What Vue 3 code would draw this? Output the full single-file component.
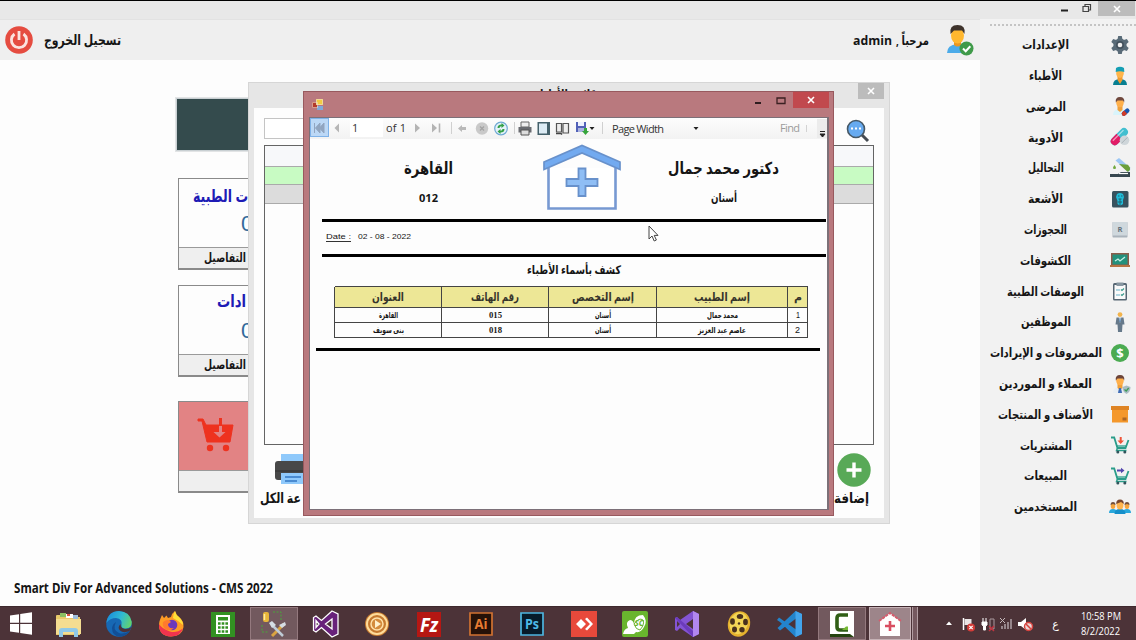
<script setup>
import { h } from 'vue'

// Single line of text fitted to an exact width.
const Fit = (p) =>
  h('svg', { width: p.w, height: p.s * 1.4, class: 'fit' }, [
    h('text', {
      x: p.w / 2,
      y: p.s * 1.05,
      'text-anchor': 'middle',
      'font-size': p.s,
      textLength: p.w,
      lengthAdjust: 'spacingAndGlyphs',
      direction: p.ltr ? 'ltr' : 'rtl'
    }, p.t)
  ])
Fit.props = { w: Number, s: Number, t: String, ltr: Boolean }

const person = (skin, hair, body) =>
  `<path d="M3 19q0-6 7-6t7 6z" fill="${body}"/><path d="M7.5 9h5v5l-2.5 2-2.5-2z" fill="#f0a03a"/><ellipse cx="10" cy="6.5" rx="3.8" ry="4.8" fill="${skin}"/><path d="M5.8 6.5Q5 1 10 1t4.200 5.500L13 4.500H7.500z" fill="${hair}"/>`

const cart = (arrow) =>
  `<path d="M1 2.500h3.200l3.300 10.500h8l3-8" fill="none" stroke="#2b9d8a" stroke-width="1.800"/><path d="M6.500 11h10" stroke="#2b9d8a" stroke-width="1.300"/><path d="M7.500 13l-1 2.500h10" fill="none" stroke="#2b9d8a" stroke-width="1.400"/><circle cx="7.800" cy="17" r="1.500" fill="#31545c"/><circle cx="14.800" cy="17" r="1.500" fill="#31545c"/>${arrow}`

const menu = [
  { t: 'الإعدادات', w: 47, i: '<g fill="#596b78"><circle cx="10" cy="10" r="6.600"/><path d="M8.200 1h3.600l.8 4H7.400zM8.200 19h3.600l.8-4H7.400z"/><path d="M8.200 1h3.600l.8 4H7.400zM8.200 19h3.600l.8-4H7.400z" transform="rotate(60 10 10)"/><path d="M8.200 1h3.600l.8 4H7.400zM8.200 19h3.600l.8-4H7.400z" transform="rotate(120 10 10)"/></g><circle cx="10" cy="10" r="4" fill="#44525e"/><circle cx="10" cy="10" r="2.300" fill="#f2f2f2"/>' },
  { t: 'الأطباء', w: 33, i: '<path d="M3 19q0-6 7-6t7 6z" fill="#087f91"/><path d="M7.500 9h5v5L10 18l-2.500-4z" fill="#f29b30"/><ellipse cx="10" cy="7" rx="3.800" ry="5" fill="#ffb54a"/><path d="M5.700 6L6 2q4-2.500 8 0l.3 4q-4.300-1.500-8.600 0z" fill="#159fb4"/>' },
  { t: 'المرضى', w: 40, i: person('#ffb04b', '#70483d', '#d9f4fb') + '<g transform="rotate(-42 15.500 16)"><rect x="11" y="14" width="9" height="4.400" rx="2.200" fill="#1656b0"/><path d="M11 16.200a2.200 2.200 0 0 1 2.200-2.200h2.300v4.400h-2.300A2.200 2.200 0 0 1 11 16.200z" fill="#cf3b28"/></g>' },
  { t: 'الأدوية', w: 35, i: '<g transform="rotate(-45 9 10)"><rect x="-1" y="6" width="21" height="8" rx="4" fill="#42bfd0"/><path d="M9.500 6H3a4 4 0 0 0 0 8h6.500z" fill="#e21c66"/><path d="M2 8.300h15" stroke="#fff" stroke-opacity=".55" stroke-width="1.300"/></g><circle cx="14.500" cy="13.300" r="4.800" fill="#cfd6da"/><path d="M11.500 16.300l6-6" stroke="#aab3b8"/>' },
  { t: 'التحاليل', w: 36, i: '<path d="M5.500 2.500L9 0l11 9.500q1 3-2 4z" fill="#9cc7f4"/><path d="M9 6l9 .7 2 3q.5 3-2.500 4z" fill="#6a9f3c"/><path d="M4.500 7q-3 4 0 4t0-4z" fill="#71a83c"/><path d="M0 16h8l3-2h9v5H0z" fill="#37474f"/><path d="M9 15.500h9" stroke="#fff" stroke-width="1.200"/>' },
  { t: 'الأشعة', w: 35, i: '<rect x="2" y="2" width="16.500" height="16.500" rx="1.500" fill="#37525e"/><path d="M7 5q3-2 6 0l1 3-1 3v4q-3 2.500-5.500 0V12L6 8z" fill="#20bcd8"/><path d="M8 7h1.500M11 7h1.500M8.500 10h3M8 13h4M10 10v6" stroke="#23616e"/>' },
  { t: 'الحجوزات', w: 43, i: '<rect x="2.500" y="2" width="15" height="15.500" rx=".8" fill="#aab3bb"/><rect x="2.500" y="2" width="15" height="13.500" fill="#cfd8dd"/><text x="10" y="12" font-size="7.500" text-anchor="middle" fill="#65717c">R</text>' },
  { t: 'الكشوفات', w: 51, i: '<path d="M1 3h18v13H1z" fill="#8b5d4a"/><path d="M2.500 4.500h15v10h-15z" fill="#24917c"/><path d="M5 11l3-2 2 2 5-4" fill="none" stroke="#c9f0e7" stroke-width="1.300"/><path d="M0 15h20v2H0z" fill="#b87343"/>' },
  { t: 'الوصفات الطبية', w: 77, i: '<rect x="3" y="2" width="14" height="17.500" rx="1.500" fill="#566673"/><path d="M4.500 4h11v14h-11z" fill="#fafafa"/><path d="M6.500 1.500h7V5h-7z" fill="#8796a1"/><path d="M6 9h4M6 14h4" stroke="#67b1c8"/><path d="M11 8.500l1 1 2-2M11 13.500l1 1 2-2" fill="none" stroke="#3b9a8c" stroke-width="1.200"/>' },
  { t: 'الموظفين', w: 50, i: '<circle cx="10" cy="2.600" r="2.400" fill="#f3b44c"/><path d="M6.500 5.500h7l1 7h-2l-.5 7.500H8l-.5-7.500h-2z" fill="#66798a"/><path d="M8.700 5.500h2.600L10 11z" fill="#fff"/><path d="M10 6v4" stroke="#3370aa"/>' },
  { t: 'المصروفات و الإيرادات', w: 112, i: '<circle cx="10" cy="10" r="9" fill="#4bab51"/><text x="10" y="14.700" font-size="13" font-weight="700" text-anchor="middle" fill="#fff">$</text>' },
  { t: 'العملاء و الموردين', w: 93, i: person('#ffaf4a', '#6c4439', '#e9eef2') + '<path d="M9 14h2l1 5H8z" fill="#3f6bb5"/><path d="M12.500 13l4-1.500 4 1.500q0 5-4 7-4-2-4-7z" fill="#a9bbc3"/><path d="M14.500 15.500l1.700 1.500 2.500-3" fill="none" stroke="#3d9a58" stroke-width="1.300"/>' },
  { t: 'الأصناف و المنتجات', w: 95, i: '<path d="M2 3h16v15.500H2z" fill="#f4982c"/><path d="M1 2h18v4H1z" fill="#df8423"/><path d="M12.500 13.500h4v3h-4z" fill="#ad6624"/>' },
  { t: 'المشتريات', w: 52, i: cart('<path d="M9.700 2h2v3.500H14L10.700 9 7.500 5.500h2.200z" fill="#ef5338"/>') },
  { t: 'المبيعات', w: 43, i: cart('<path d="M7 3.500h4V1.800l3.500 2.700L11 7.300V5.500H7z" fill="#5447ad"/>') },
  { t: 'المستخدمين', w: 63, i: '<path d="M-1 16q0-4 4-4t4 4zM13 16q0-4 4-4t4 4z" fill="#29a8dc"/><g fill="#f6a53d"><ellipse cx="3" cy="9" rx="2.300" ry="3"/><ellipse cx="17" cy="9" rx="2.300" ry="3"/></g><path d="M.6 8Q.5 5 3 5t2.500 3L3 7zM14.500 8q0-3 2.500-3t2.500 3L17 7z" fill="#74503b"/><path d="M4.500 17q0-5 5.500-5t5.500 5z" fill="#168fca"/><ellipse cx="10" cy="8" rx="3.400" ry="4.600" fill="#ffb54f"/><path d="M6.200 7Q6 2.500 10 2.500T13.800 7L11 5z" fill="#79462d"/>' }
]

const tasks = [
  { i: '<path d="M1 5q0-1 1-1h6l1.500 2H25v18H1z" fill="#e8c96a"/><path d="M5 2h6v4H5z" fill="#8bbf63"/><path d="M11 3h7v4h-7z" fill="#fff"/><path d="M12 3h3v2h-3z" fill="#d85340"/><path d="M18 4h5v4h-5z" fill="#9dbedb"/><path d="M1 8h25v15H1z" fill="#f4dd91"/><path d="M4 26v-6q0-3 3-3h13q3 0 3 3v6h-4v-5H8v5z" fill="#8fc9e8"/>' },
  { i: '<defs><linearGradient id="eg" x1="0" x2="1" y1=".3" y2=".6"><stop offset="0" stop-color="#1a8ddc"/><stop offset=".55" stop-color="#30b9d2"/><stop offset="1" stop-color="#63d26d"/></linearGradient></defs><circle cx="13" cy="13" r="12.800" fill="#1768b4"/><path d="M.3 12Q2 0 13 0q11 .5 12.800 11 0 6-6 6.500-5 0-4.300-3 1.500-7-5.500-7.500-6 0-9.700 5z" fill="url(#eg)"/><path d="M10 11q-4 8 3 11 5 2 11-2.500-3 6-10 6.300Q6 25 6 17q.5-4 4-6z" fill="#124f96"/><path d="M14.500 13q0 4 4 5 4 .5 7-2l-2 4q-6 2.500-9.500-.5-3-3 .5-6.500z" fill="#4c3338"/>' },
  { i: '<path d="M13 25.500C5 25.500.5 20 1 13.500 1.200 9.500 3 6.500 4 4l2 3 2.500-2.500L10 7l3-1q1-4 4-6 1 4 4 6 5 4 4.500 10-1 9-12.500 9.500z" fill="#ff9c25"/><path d="M1 13q-.5 12 12 12.500 9 0 12-8-7 5-13 3Q4 18 1 13z" fill="#f1344e"/><path d="M17 0q1 4 4 6 4 4 4 8l-5-4-5-3q0-4 2-7z" fill="#ffdf38"/><circle cx="14" cy="14" r="5.300" fill="#6d39ba"/><path d="M5 11q5-4 8 0l-3 2q0 5 6 4-4 4-9 1-3-3-2-7z" fill="#ff7a2d"/>' },
  { i: '<path d="M1 1h24v25H1z" fill="#329122"/><path d="M6 4h14v19H6z" fill="#fff"/><path d="M8 6h10v3.500H8z" fill="#329122"/><path d="M8 12.500h10M8 16.500h10M8 20.500h10" stroke="#329122" stroke-width="2.500" stroke-dasharray="2.600 1.100"/>' },
  { on: true, i: '<rect x="2" y="1" width="6" height="10" rx="2" fill="#e8b63a"/><path d="M3.500 3v6" stroke="#ffeaa0" stroke-width="1.500"/><path d="M12 1h8v8M1 14v7h7" fill="none" stroke="#48a63b" stroke-dasharray="2 1.500"/><path d="M23 13L11 25" stroke="#d9a441" stroke-width="3"/><path d="M11 14l11 11" stroke="#bfcbd6" stroke-width="2.500"/><path d="M8 12l3-2 4 4-4 3zM18 14l6-3 1 3-4 3z" fill="#d5dde4"/>' },
  { i: '<path d="M19 0l6 2.800v20.400L19 26 8.500 16.500 3 21l-2.500-1.500v-13L3 5l5.500 4.500zM3 9.500v7L6 13zM19 8l-6.500 5 6.500 5z" fill="#68217a" stroke="#fff" stroke-width="1.300" fill-rule="evenodd"/>' },
  { i: '<circle cx="13" cy="13" r="12" fill="#c5792f"/><circle cx="13" cy="13" r="10" fill="none" stroke="#ffdc9a" stroke-width="2"/><circle cx="13" cy="13" r="6" fill="#d48b3c" stroke="#ffe1a9" stroke-width="1.500"/><path d="M11 9l6 4-6 4z" fill="#fff0cc"/>' },
  { i: '<path d="M1 1h24v25H1z" fill="#b51713"/><text x="13" y="21" font-size="20" font-weight="700" font-style="italic" text-anchor="middle" fill="#fff" textLength="18" lengthAdjust="spacingAndGlyphs">Fz</text>' },
  { i: '<path d="M2 2h22v22H2z" fill="#261108" stroke="#d17231" stroke-width="1.700"/><text x="13" y="18" font-size="14" text-anchor="middle" fill="#e67c32" textLength="13" lengthAdjust="spacingAndGlyphs">Ai</text>' },
  { i: '<path d="M2 2h22v22H2z" fill="#071b2a" stroke="#4db5df" stroke-width="1.700"/><text x="13" y="18" font-size="14" text-anchor="middle" fill="#4db9e6" textLength="14" lengthAdjust="spacingAndGlyphs">Ps</text>' },
  { i: '<path d="M0 0h26v26H0z" fill="#e8493b"/><path d="M5 13l5-5 5 5-5 5zM14 8l5 5-5 5 2 1.500L22 13l-6-6.500z" fill="#fff"/>' },
  { i: '<rect width="26" height="26" rx="2" fill="#69b52e"/><path d="M1 23q1-5 5-6Q3 11 8 9q3 0 4 4 0-9 9-9 5 6 1 12-3 6-8 5l-2 2z" fill="#fff"/><path d="M12 13q5-7 9-4 2 4-3 10-4 0-6-6" fill="none" stroke="#69b52e"/><text x="17" y="15" font-size="8" font-weight="700" font-style="italic" text-anchor="middle" fill="#69b52e">SC</text>' },
  { i: '<path d="M19 0l6 3v20l-6 3-13-9-3 3-2-1V7l2-1 3 3zM3 10v6l3-3zM19 8l-7 5 7 5z" fill="#8454d4" fill-rule="evenodd"/><path d="M19 0l6 3v20l-6 3z" fill="#b287f0"/><path d="M1 7l2-1 16 14v6z" fill="#6b3bbc"/>' },
  { i: '<ellipse cx="13" cy="13" rx="11" ry="13" transform="rotate(18 13 13)" fill="#e5b12e"/><ellipse cx="12.500" cy="12.500" rx="9" ry="11" transform="rotate(18 13 13)" fill="#f4d556"/><g fill="#4a311d"><ellipse cx="14" cy="5.500" rx="3.200" ry="2.500"/><ellipse cx="6.500" cy="10.500" rx="2.400" ry="3.200"/><ellipse cx="19.500" cy="11" rx="2.400" ry="3.200"/><ellipse cx="8.500" cy="18.500" rx="2.500" ry="3"/><ellipse cx="16" cy="18.800" rx="2.700" ry="2.700"/><circle cx="13" cy="12.500" r="1.200"/></g>' },
  { i: '<path d="M18.500 0L25 3v20l-6.500 3L3 11 0 9l2-2.500 17 12V7.500L3 19.500.500 17 18.500 0z" fill="#2384cc"/><path d="M18.500 0L25 3v20l-6.500 3z" fill="#42a4ec"/>' },
  { on: true, i: '<path d="M1 0h24v26H1z" fill="#fff"/><path d="M1 23h20l4 3H1z" fill="#25440f"/><path d="M19 4H11Q8 4 8 7v9q0 3 3 3h8" fill="none" stroke="#315f16" stroke-width="3.600"/><path d="M19 19h-6l4-3.500h2z" fill="#76b936"/>' }
]

const rows = [
  [{ t: '1', w: 4 }, { t: 'محمد جمال', w: 31 }, { t: 'أسنان', w: 16 }, { t: '015', w: 13 }, { t: 'القاهرة', w: 19 }],
  [{ t: '2', w: 5 }, { t: 'عاصم عبد العزيز', w: 48 }, { t: 'أسنان', w: 16 }, { t: '018', w: 13 }, { t: 'بنى سويف', w: 31 }]
]
const heads = [{ t: 'م', w: 8 }, { t: 'إسم الطبيب', w: 56 }, { t: 'إسم التخصص', w: 62 }, { t: 'رقم الهاتف', w: 48 }, { t: 'العنوان', w: 32 }]
</script>

<template>
  <div class="screen">
    <header class="titlebar">
      <svg width="70" height="18"><path d="M1 9.500h7" stroke="#222" stroke-width="2" /><path d="M23 5.500h5.500v5H23zM25 5V3.500h5.500V9H29" fill="none" stroke="#444" stroke-width="1.200" /></svg>
      <span class="tclose"><svg width="8" height="8"><path d="M1 1l6 6M7 1L1 7" stroke="#fff" stroke-width="1.600" /></svg></span>
    </header>

    <div class="body">
      <main>
        <div class="top">
          <svg width="28" height="28"><circle cx="14" cy="14" r="13.800" fill="#e54c40" /><path d="M9.500 8a7.600 7.600 0 1 0 9 0" fill="none" stroke="#fbe3df" stroke-width="2.800" /><path d="M14 5v9" stroke="#fbe3df" stroke-width="2.800" /></svg>
          <Fit class="logout" :w="77" :s="14" t="تسجيل الخروج" />
          <Fit class="user" :w="39" :s="13" t="admin" ltr />
          <Fit class="hello" :w="33" :s="13" t="مرحباً ," />
          <svg class="avatar" width="28" height="31"><path d="M1 28q0-8 10-9 10 1 11 9z" fill="#4cabe9" /><path d="M8 14h7v6q-3.500 3-7 0z" fill="#e99722" /><ellipse cx="11.500" cy="10.500" rx="6.500" ry="8" fill="#ffb72f" /><path d="M4.500 9Q3 0 11.500 0T18.500 9L16 5.500H8z" fill="#3e332c" /><circle cx="20.500" cy="23.500" r="7" fill="#3f9a49" /><path d="M17 23.500l2.700 2.700 4.600-5" fill="none" stroke="#fff" stroke-width="2" /></svg>
        </div>
        <div class="cards">
          <div class="dark"></div>
          <div class="card">
            <div class="ct"><Fit :w="55" :s="17" t="ت الطبية" /></div>
            <div class="zero">0</div>
            <div class="cf"><Fit :w="42" :s="12.5" t="التفاصيل" /></div>
          </div>
          <div class="card second">
            <div class="ct"><Fit :w="29" :s="17" t="ادات" /></div>
            <div class="zero">0</div>
            <div class="cf"><Fit :w="42" :s="12.5" t="التفاصيل" /></div>
          </div>
          <div class="card red">
            <div class="pic"><svg width="38" height="36"><path d="M1 2h5l3 6h27l-3 17H10L5 4H1z" fill="#ee321f" stroke="#ee321f" stroke-linejoin="round" /><path d="M23.500 1v9" stroke="#ee321f" stroke-width="3" /><path d="M22 9h3v6h3.500L22.500 20.500 16.500 15H22z" fill="#e28384" /><circle cx="13" cy="31" r="3.200" fill="#ee321f" /><circle cx="29" cy="31" r="3.200" fill="#ee321f" /></svg></div>
            <div class="cf"></div>
          </div>
        </div>
        <Fit class="copyright" :w="259" :s="14" t="Smart Div For Advanced Solutions - CMS 2022" ltr />
      </main>

      <aside>
        <div class="dots"></div>
        <div v-for="m in menu" :key="m.t" class="item">
          <div class="label"><Fit :w="m.w" :s="12.5" :t="m.t" /></div>
          <svg class="ico" width="20" height="20" viewBox="0 0 20 20" v-html="m.i"></svg>
        </div>
      </aside>
    </div>

    <section class="win">
      <div class="wbar">
        <Fit class="wtitle" :w="62" :s="12" t="قائمة الأطباء" />
        <span class="wclose"><svg width="8" height="8"><path d="M1 1l6 6M7 1L1 7" stroke="#fff" stroke-width="1.600" /></svg></span>
      </div>
      <div class="wbody">
        <div class="search">
          <div class="field"></div>
          <svg width="24" height="24"><path d="M15 15l7 7" stroke="#454b52" stroke-width="3" /><circle cx="10" cy="10" r="8.500" fill="#66aaf0" stroke="#465866" stroke-width="1.600" /><path d="M5 9.500h10" stroke="#fff" stroke-width="2" stroke-dasharray="2 2" /></svg>
        </div>
        <div class="grid"><i class="h"></i><i class="g"></i><i class="s"></i></div>
        <div class="acts">
          <div class="print">
            <svg width="36" height="32"><path d="M7 1h28v9H7z" fill="#8fc9fb" /><rect x="1" y="8" width="34" height="19" rx="3" fill="#484848" /><path d="M1 18h34" stroke="#333" /><path d="M7 20h28v11H7z" fill="#8fc9fb" /><path d="M11 24h16M11 28h12" stroke="#3577c4" stroke-width="1.600" /></svg>
            <Fit :w="41" :s="14" t="عة الكل" />
          </div>
          <div class="add">
            <svg width="34" height="34"><circle cx="17" cy="17" r="16.700" fill="#58a957" /><path d="M17 9.500v15M9.500 17h15" stroke="#fff" stroke-width="3.400" /></svg>
            <Fit :w="35" :s="14" t="إضافة" />
          </div>
        </div>
      </div>
    </section>

    <section class="dlg">
      <div class="dbar">
        <svg width="12" height="13"><path d="M0 4h6v6H0z" fill="#b43b2b" /><path d="M4 1h7v6H4z" fill="#f3ca40" /><path d="M5 8h6v4H5z" fill="#80a8d8" /><path d="M.5 4.500h5v5h-5zM4.500 1.500h6v5h-6z" fill="none" stroke="#eee0d0" stroke-width=".6" /></svg>
        <svg class="mm" width="32" height="10"><path d="M0 7h6" stroke="#2f1d1f" stroke-width="2" /><path d="M22 2h8v5.500h-8z" fill="none" stroke="#3b2022" stroke-width="1.300" /></svg>
        <span class="dclose"><svg width="8" height="8"><path d="M1 1l6 6M7 1L1 7" stroke="#fff" stroke-width="1.600" /></svg></span>
      </div>
      <div class="view">
        <div class="tools">
          <svg width="519" height="21">
            <rect x=".5" y=".5" width="18" height="18" fill="#bcd8f6" stroke="#7fb2e8" />
            <path d="M4.500 5v10M14 5v10l-4.500-5zM10 5v10l-4.500-5z" fill="#91a5c0" stroke="#91a5c0" />
            <path d="M29 5.500v9L24.500 10z" fill="#b6b6b6" /><path d="M40 1h33v18H40z" fill="#fff" />
            <path d="M105 5.500v9l5-4.500z" fill="#b4b4b4" /><path d="M122 5.500v9l5-4.500z" fill="#b4b4b4" /><path d="M129.500 5.500v9" stroke="#b4b4b4" stroke-width="1.600" />
            <path d="M141.500 4v12M204.500 4v12M292.500 4v12" stroke="#d0d0d0" />
            <path d="M148 10.500l4-3.500v2h4v3h-4v2z" fill="#b9b9b9" />
            <circle cx="172" cy="10.500" r="6.200" fill="#c9c9c9" /><path d="M170 8.500l4 4M174 8.500l-4 4" stroke="#a3a3a3" stroke-width="1.300" />
            <circle cx="191" cy="10.500" r="6.300" fill="#e5f2fa" stroke="#6ea9d3" stroke-width="1.200" /><path d="M187.500 10q0-3.500 4-3.500V5l3 2.500-3 2.500V8.300q-2 0-2 1.700zM194.500 11q0 3.500-4 3.500V16l-3-2.500 3-2.500v1.700q2 0 2-1.700z" fill="#33a047" />
            <path d="M211 4h8v5h-8z" fill="#eee" stroke="#666" /><path d="M208.500 9h13v5.500h-13z" fill="#696b70" /><path d="M211 12h8v5h-8z" fill="#ddd" stroke="#555" />
            <path d="M227.500 4h12.500v13h-12.500z" fill="#44606a" /><path d="M229 5.500h8v10h-8z" fill="#dcebf4" />
            <path d="M246.500 5.500h5v8.500h-5zM253 5.500h5.500v9.500H253z" fill="#eee" stroke="#555" stroke-width="1.200" /><path d="M246 15.500h5l1 1" fill="none" stroke="#444" stroke-width="1.500" />
            <path d="M266 4h10v10h-10z" fill="#5261b8" /><path d="M268 4h6v4h-6z" fill="#edf1ff" /><path d="M268 10h6v4h-6z" fill="#aab3df" /><path d="M274 10h3v3h2l-3.500 4-3.500-4h2z" fill="#35a43c" /><path d="M279.500 9h5l-2.500 3zM383.500 9h5l-2.500 3z" fill="#222" />
            <path d="M507 1h10v19h-10z" fill="#ececec" /><path d="M510 13.500h5M510 16h5l-2.500 3z" stroke="#222" fill="#222" />
            <g class="ttext"><text x="42" y="14">1</text><text x="76" y="14" textLength="20">of 1</text><text x="302" y="14.500" textLength="52">Page Width</text><text x="470" y="14" fill="#9b9b9b" textLength="20">Find</text></g>
            <path d="M496.500 7v7" stroke="#d3d3d3" />
          </svg>
        </div>
        <div class="rhead">
          <div class="rc left"><Fit :w="49" :s="16.500" t="القاهرة" /><Fit :w="19" :s="11" t="012" ltr /></div>
          <svg class="house" width="80" height="68"><path d="M6.500 25v40.500h67V25" fill="#fff" stroke="#7799d2" stroke-width="2.600" /><path d="M2 19L40 2.500 78 19v7.500L40 10 2 26.500z" fill="#72aaf0" stroke="#6891cb" stroke-width="1.700" /><path d="M36.500 25.500h7v10.500h12v7h-12v10h-7V43h-12v-7h12z" fill="#8fbef5" stroke="#6891cb" stroke-width="1.800" /></svg>
          <div class="rc right"><Fit :w="111" :s="16.500" t="دكتور محمد جمال" /><Fit :w="26" :s="12" t="أسنان" /></div>
        </div>
        <div class="date"><u><Fit :w="25" :s="8" t="Date :" ltr /></u><Fit :w="53" :s="8" t="02 - 08 - 2022" ltr /></div>
        <div class="rtitle"><Fit :w="94" :s="12" t="كشف بأسماء الأطباء" /></div>
        <div class="tbl">
          <div v-for="c in heads" :key="c.t" class="th"><Fit :w="c.w" :s="11.500" :t="c.t" /></div>
          <template v-for="(r, n) in rows" :key="n">
            <div v-for="(c, k) in r" :key="k" class="td" :class="{ num: k === 0 }"><Fit :w="c.w" :s="8.500" :t="c.t" /></div>
          </template>
        </div>
        <div class="end"></div>
      </div>
    </section>

    <svg class="cursor" width="12" height="18"><path d="M1 1v13l3-3 2.200 5 2.200-1-2.200-4.600H10z" fill="#fff" stroke="#444" /></svg>

    <footer class="taskbar">
      <div class="start"><svg width="23" height="23"><path d="M0 3.500l9-1.300v8.600H0zM10.200 2L22 .3v10.500H10.200zM0 12h9v8.700l-9-1.300zM10.200 12H22v10.700L10.200 21z" fill="#fff" /></svg></div>
      <div v-for="(k, n) in tasks" :key="n" class="task"><span :class="{ on: k.on }"><svg width="26" height="26" viewBox="0 0 26 26" v-html="k.i"></svg></span></div>
      <div class="clinic"><svg width="24" height="26"><path d="M2 10L12 2l10 8v15H2z" fill="#fff" /><path d="M1 10l11-8 11 8" fill="none" stroke="#d65b6c" stroke-width="2" stroke-dasharray="3 1" /><path d="M12 10v10M7 15h10" stroke="#d94e61" stroke-width="2.600" /></svg></div>
      <div class="stack"></div>
      <svg class="tray" width="94" height="20">
        <path d="M0 11h6L3 7.500z" fill="#fff" /><path d="M17.500 4v12" stroke="#fff" stroke-width="1.500" /><path d="M18.500 5h7v6h-7z" fill="#e9e4e5" /><circle cx="25" cy="13.500" r="4" fill="#d43c38" /><path d="M23.300 11.800l3.400 3.400M26.700 11.800l-3.400 3.400" stroke="#fff" stroke-width="1.200" />
        <path d="M37 4v4M40 4v4M36 8h5v3l-1.500 1v4h-2v-4L36 11z" fill="#fff" stroke="#fff" /><path d="M44 5h4v10h-4z" fill="none" stroke="#a8999d" /><path d="M43 12l5 5M48 12l-5 5" stroke="#bf3540" stroke-width="1.500" />
        <path d="M56 15v-3M59 15v-5M62 15V8M65 15V5" stroke="#96868b" stroke-width="2" /><path d="M54 4l5 5M59 4l-5 5" stroke="#c5babc" />
        <path d="M72 8h3l5-4v12l-5-4h-3z" fill="#fff" /><circle cx="82.500" cy="12.500" r="4" fill="#e9d5d5" stroke="#d6423d" stroke-width="1.500" /><path d="M80 10l5 5" stroke="#d6423d" stroke-width="1.500" />
      </svg>
      <span class="lang">ع</span>
      <div class="clock"><Fit :w="40" :s="10.500" t="10:58 PM" ltr /><Fit :w="39" :s="10.500" t="8/2/2022" ltr /></div>
    </footer>
  </div>
</template>

<style>
html, body { overflow: hidden; background: #fdfdfd; }
.fit { display: block; overflow: visible; flex: none; }
.fit text { fill: currentColor; font-family: inherit; }
</style>

<style scoped>
* { box-sizing: border-box; }
.screen { position: relative; width: 1136px; height: 640px; display: flex; flex-direction: column; overflow: hidden; border-top: 1px solid #000; background: #fdfdfd; color: #151515; font-family: "Open Sans", "DejaVu Sans", sans-serif; font-weight: 700; }
svg { display: block; flex: none; overflow: visible; }
.titlebar { height: 18px; flex: none; background: #e8e8e8; display: flex; justify-content: flex-end; }
.titlebar > svg { width: 38px; }
.tclose { width: 37px; height: 15px; background: #bcbcbc; display: flex; align-items: center; justify-content: center; margin-right: 1px; }
.body { height: 587px; flex: none; display: flex; }
main { width: 980px; display: flex; flex-direction: column; }
.top { height: 41px; flex: none; background: #efefef; border-top: 1px solid #e2e2e2; display: flex; align-items: center; padding-left: 5px; }
.logout { margin-left: 11px; }
.user { margin-left: 732px; }
.hello { margin-left: 4px; }
.avatar { margin-left: 17px; }
.cards { height: 510px; display: flex; flex-direction: column; padding: 37px 0 0 175px; }
.dark { width: 90px; height: 55px; background: #344b4d; border: 2px solid #c9d0d3; outline: 1px solid #e2e4e5; outline-offset: -1px; }
.card { width: 90px; height: 92px; margin: 26px 0 0 3px; border: 1px solid #8a8a8a; border-bottom-width: 2px; display: flex; flex-direction: column; }
.card.second { margin-top: 15px; }
.card.red { margin-top: 24px; }
.ct { color: #1e1bb5; width: 69px; height: 30px; display: flex; justify-content: flex-end; padding-top: 5px; }
.second .ct { width: 67px; padding-top: 3px; }
.zero { font: 22px/26px "Liberation Sans", sans-serif; color: #336a9b; height: 38px; padding: 2px 0 0 62px; }
.cf { flex: 1; background: #efefef; border-top: 1px solid #9a9a9a; padding: 1px 0 0 25px; }
.pic { height: 68px; background: #e28384; padding: 15px 0 0 18px; }
.copyright { margin: 8px 0 0 14px; font-family: "Noto Sans", sans-serif; }
aside { width: 156px; background: #f2f2f2; padding-top: 5px; }
.dots { height: 2px; margin-left: 10px; border-top: 2px dotted #c4c4c4; }
.item { height: 30.8px; display: flex; align-items: center; }
.dots + .item { margin-top: 3px; }
.label { width: 131px; display: flex; justify-content: center; padding-top: 1px; }
.ico { margin-left: -1px; margin-top: 1px; }
.win { position: absolute; left: 248px; top: 81px; width: 642px; height: 442px; background: #e6e6e6; border: 1px solid #d6d6d6; padding: 0 5px 5px; }
.wbar { height: 25px; display: flex; justify-content: flex-end; }
.wtitle { margin: 2px 261px 0 0; }
.wclose { width: 26px; height: 16px; background: #bcbcbc; display: flex; align-items: center; justify-content: center; }
.wbody { height: 410px; background: #fdfdfd; padding: 10px 10px 0; }
.search { display: flex; justify-content: space-between; height: 27px; }
.field { width: 560px; height: 21px; border: 1px solid #c4c4c4; background: #fff; }
.search svg { margin: 1px 4px 0 0; }
.grid { height: 300px; border: 1px solid #646464; display: flex; flex-direction: column; }
.grid i { display: block; border-bottom: 1px solid #aaa; }
.h { height: 21px; background: #f7f8fa; }
.g { height: 18px; background: #c8fbc3; }
.s { height: 19px; background: #dcdcdc; }
.acts { display: flex; justify-content: space-between; padding-top: 8px; }
.print { padding-left: 10px; }
.print .fit { margin: 3px 0 0 -14px; }
.add { margin-right: 3px; }
.add .fit { margin: 1px 0 0 -3px; }
.dlg { position: absolute; left: 303px; top: 90px; width: 531px; height: 425px; background: #b9797e; border: 1px solid #98595e; padding: 0 5px 5px; }
.dbar { height: 25px; display: flex; }
.dbar > svg:first-child { margin: 6px 0 0 3px; }
.mm { margin: 4px 0 0 431px; }
.dclose { width: 39px; height: 16px; margin: 0 -1px 0 6px; background: #c1494e; display: flex; align-items: center; justify-content: center; }
.view { width: 520px; height: 393px; border: 1px solid #7c7078; border-right-width: 2px; background: #fdfdfd; }
.tools { height: 21px; background: linear-gradient(#fdfdfd, #f2f2f2); overflow: hidden; }
.ttext { font: 400 11px "Open Sans", sans-serif; fill: #333; }
.rhead { height: 83px; margin: 0 1px 0 12px; border-bottom: 3px solid #000; display: flex; }
.rc { display: flex; flex-direction: column; align-items: center; padding-top: 18px; gap: 10px; }
.left { width: 215px; }
.house { margin: 4px 0 0 6px; }
.right { width: 205px; padding-top: 18px; gap: 9px; }
.date { height: 35px; margin: 0 1px 0 12px; border-bottom: 3px solid #000; display: flex; padding: 9px 0 0 4px; gap: 7px; font-family: "Liberation Sans", sans-serif; font-weight: 400; }
.date u { height: 11px; border-bottom: 1px solid #333; }
.rtitle { height: 29px; padding: 4px 0 0 217px; }
.tbl { direction: rtl; margin-left: 25px; width: 473px; display: grid; grid-template-columns: 20px 131px 108px 107px 107px; grid-template-rows: 21px 15px 15px; border-top: 1px solid #444; border-right: 1px solid #444; }
.th, .td { border-left: 1px solid #444; border-bottom: 1px solid #444; display: flex; align-items: center; justify-content: center; }
.th { background: #ede796; color: #36342b; }
.td { font-family: "Liberation Serif", "DejaVu Sans", serif; }
.num { font-family: "Liberation Sans", sans-serif; font-weight: 400; }
.end { width: 504px; height: 3px; margin: 10px 0 0 6px; background: #000; }
.cursor { position: absolute; left: 648px; top: 224px; }
.taskbar { flex: none; height: 34px; background: #4c3338; border-top: 1px solid #3e282d; display: flex; align-items: center; color: #fff; }
.start { width: 42px; display: flex; justify-content: center; }
.task { width: 51.600px; height: 33px; display: flex; justify-content: center; }
.task span { width: 48px; display: flex; align-items: center; justify-content: center; }
.task .on { background: #72595e; border: 1px solid #94797e; }
.clinic { width: 42px; height: 33px; margin-left: 1px; background: #9d858a; border: 1px solid #c6b2b6; display: flex; align-items: center; justify-content: center; }
.stack { width: 6px; height: 33px; border: solid #b29da2; border-width: 0 1px; margin-left: 1px; background: #75595f; }
.tray { margin-left: 28px; }
.lang { width: 16px; margin-left: 8px; text-align: center; font-size: 11px; font-weight: 400; }
.clock { margin-left: 17px; font-weight: 400; }
</style>
